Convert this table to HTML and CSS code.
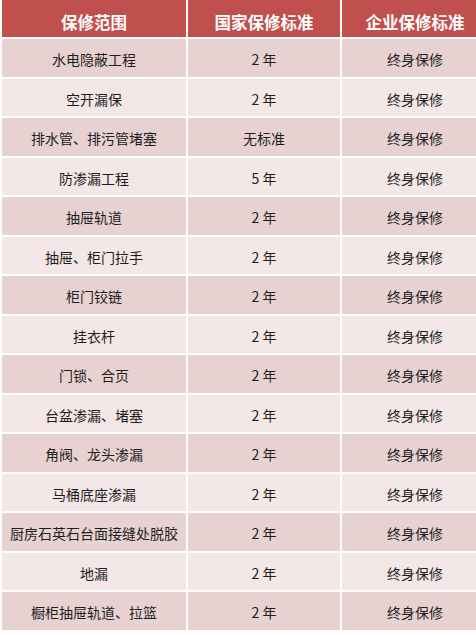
FILE: index.html
```html
<!DOCTYPE html>
<html lang="zh-CN">
<head>
<meta charset="utf-8">
<title>保修范围</title>
<link rel="stylesheet" href="styles.css">
</head>
<body>
<div class="sheet">
  <div class="grid">
    <div class="cell head">保修范围</div>
    <div class="cell head">国家保修标准</div>
    <div class="cell head">企业保修标准</div>

    <div class="cell dark">水电隐蔽工程</div><div class="cell dark">2 年</div><div class="cell dark">终身保修</div>
    <div class="cell light">空开漏保</div><div class="cell light">2 年</div><div class="cell light">终身保修</div>
    <div class="cell dark">排水管、排污管堵塞</div><div class="cell dark">无标准</div><div class="cell dark">终身保修</div>
    <div class="cell light">防渗漏工程</div><div class="cell light">5 年</div><div class="cell light">终身保修</div>
    <div class="cell dark">抽屉轨道</div><div class="cell dark">2 年</div><div class="cell dark">终身保修</div>
    <div class="cell light">抽屉、柜门拉手</div><div class="cell light">2 年</div><div class="cell light">终身保修</div>
    <div class="cell dark">柜门铰链</div><div class="cell dark">2 年</div><div class="cell dark">终身保修</div>
    <div class="cell light">挂衣杆</div><div class="cell light">2 年</div><div class="cell light">终身保修</div>
    <div class="cell dark">门锁、合页</div><div class="cell dark">2 年</div><div class="cell dark">终身保修</div>
    <div class="cell light">台盆渗漏、堵塞</div><div class="cell light">2 年</div><div class="cell light">终身保修</div>
    <div class="cell dark">角阀、龙头渗漏</div><div class="cell dark">2 年</div><div class="cell dark">终身保修</div>
    <div class="cell light">马桶底座渗漏</div><div class="cell light">2 年</div><div class="cell light">终身保修</div>
    <div class="cell dark">厨房石英石台面接缝处脱胶</div><div class="cell dark">2 年</div><div class="cell dark">终身保修</div>
    <div class="cell light">地漏</div><div class="cell light">2 年</div><div class="cell light">终身保修</div>
    <div class="cell dark">橱柜抽屉轨道、拉篮</div><div class="cell dark">2 年</div><div class="cell dark">终身保修</div>
  </div>
</div>
</body>
</html>
```

FILE: styles.css
```css
html, body {
  margin: 0;
  padding: 0;
  background: #ffffff;
}
body {
  width: 476px;
  height: 635px;
  overflow: hidden;
  font-family: "Microsoft YaHei", "Noto Sans CJK SC", "Noto Sans", sans-serif;
}
.sheet {
  width: 490px;
  padding-left: 2px;
}
.grid {
  display: grid;
  grid-template-columns: 184px 152px 146px;
  grid-template-rows: 37px repeat(15, 37.5px);
  gap: 2px;
}
.cell {
  display: flex;
  align-items: center;
  justify-content: center;
  font-size: 14px;
  color: #1e1e1e;
  padding-top: 3px;
  box-sizing: border-box;
  white-space: nowrap;
}
.head {
  background: #c0504d;
  color: #ffffff;
  font-size: 16.5px;
  font-weight: bold;
  padding-top: 7px;
}
.dark {
  background: #e8d1d1;
}
.light {
  background: #f3e8e7;
}
```
